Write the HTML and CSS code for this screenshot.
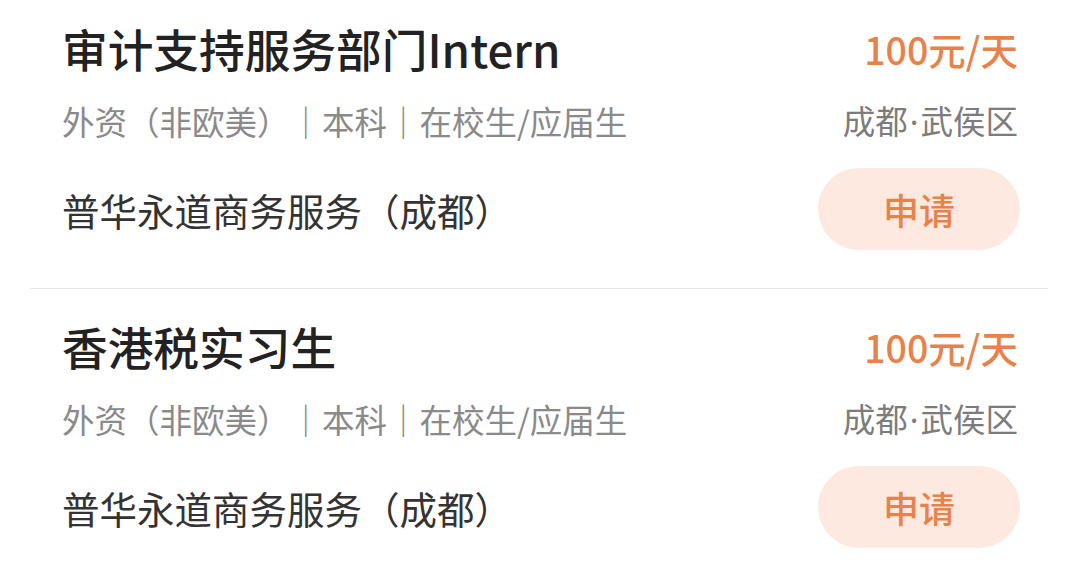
FILE: index.html
```html
<!DOCTYPE html>
<html lang="zh-CN">
<head>
    <meta charset="UTF-8">
    <title>实习职位</title>
    <link rel="stylesheet" href="styles.css">
</head>
<body>
    <ul class="job-list">
        <li class="job">
            <div class="job-row job-head">
                <span class="job-title">审计支持服务部门Intern</span>
                <span class="job-pay">100元/天</span>
            </div>
            <div class="job-row job-meta">
                <span class="job-tags">外资（非欧美）｜本科｜在校生/应届生</span>
                <span class="job-place">成都<span class="dot">·</span>武侯区</span>
            </div>
            <div class="job-row job-foot">
                <span class="job-company">普华永道商务服务（成都）</span>
                <button class="apply-btn">申请</button>
            </div>
        </li>
        <li class="job">
            <div class="job-row job-head">
                <span class="job-title">香港税实习生</span>
                <span class="job-pay">100元/天</span>
            </div>
            <div class="job-row job-meta">
                <span class="job-tags">外资（非欧美）｜本科｜在校生/应届生</span>
                <span class="job-place">成都<span class="dot">·</span>武侯区</span>
            </div>
            <div class="job-row job-foot">
                <span class="job-company">普华永道商务服务（成都）</span>
                <button class="apply-btn">申请</button>
            </div>
        </li>
    </ul>
</body>
</html>
```

FILE: styles.css
```css
body {
    font-family: "Noto Sans CJK SC", "Noto Sans", sans-serif;
    margin: 0;
    padding: 0;
    background-color: #fff;
}

.job-list {
    list-style-type: none;
    margin: 0 32px 0 30px;
    padding: 0;
}

.job {
    padding: 27px 28px 38px 32px;
    border-bottom: 1px solid #e8e8e8;
}

.job:first-child {
    padding-top: 18px;
}

.job-row {
    display: flex;
    justify-content: space-between;
    align-items: center;
}

.job-head {
    height: 60px;
}

.job-meta {
    height: 44px;
    margin-top: 20px;
}

.job-foot {
    height: 82px;
    margin-top: 26px;
}

.job-title {
    font-size: 45.7px;
    font-weight: 500;
    color: #222;
}

.job-pay {
    font-size: 37.5px;
    font-weight: 500;
    color: #e8824b;
    margin-right: 2px;
}

.job-tags, .job-place {
    font-size: 32.5px;
    color: #8a8a8a;
}

.job-place {
    color: #7c7c7c;
    margin-right: 2px;
}

.dot {
    font-family: "Noto Sans", sans-serif;
    margin: 0 2px;
}

.job-company {
    font-size: 37.5px;
    color: #333;
}

.apply-btn {
    width: 202px;
    height: 82px;
    border: none;
    border-radius: 41px;
    background-color: #fde9df;
    color: #e8824b;
    font-family: inherit;
    font-size: 36px;
    font-weight: 500;
    cursor: pointer;
}
```
